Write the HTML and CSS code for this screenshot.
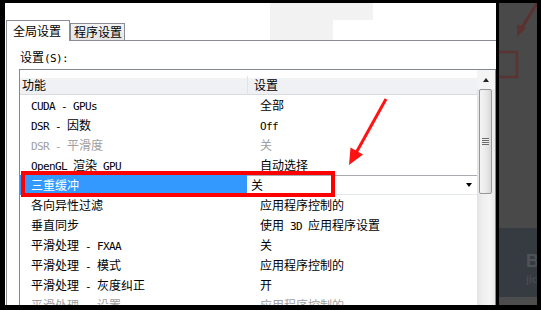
FILE: index.html
```html
<!DOCTYPE html>
<html lang="zh-CN">

<head>
    <meta charset="UTF-8">
    <title>全局设置</title>
    <link rel="stylesheet" href="styles.css">
</head>

<body>
    <div class="screen">
        <div class="dialog">
            <div class="tabs">
                <div class="tab active">全局设置</div>
                <div class="tab">程序设置</div>
            </div>
            <div class="panel">
                <div class="label">设置<span class="en">(S):</span></div>
                <div class="listbox">
                    <div class="grid">
                        <div class="head">
                            <div class="c1">功能</div>
                            <div class="c2">设置</div>
                        </div>
                        <div class="row"><div class="c1"><span class="en">CUDA - GPUs</span></div><div class="c2">全部</div></div>
                        <div class="row"><div class="c1"><span class="en">DSR - </span>因数</div><div class="c2"><span class="en">Off</span></div></div>
                        <div class="row disabled"><div class="c1"><span class="en">DSR - </span>平滑度</div><div class="c2">关</div></div>
                        <div class="row"><div class="c1"><span class="en">OpenGL </span>渲染<span class="en"> GPU</span></div><div class="c2">自动选择</div></div>
                        <div class="row selected">
                            <div class="c1">三重缓冲</div>
                            <div class="editor"><span>关</span><span class="drop"></span></div>
                            <div class="mark"></div>
                        </div>
                        <div class="row"><div class="c1">各向异性过滤</div><div class="c2">应用程序控制的</div></div>
                        <div class="row"><div class="c1">垂直同步</div><div class="c2">使用<span class="en"> 3D </span>应用程序设置</div></div>
                        <div class="row"><div class="c1">平滑处理<span class="en"> - FXAA</span></div><div class="c2">关</div></div>
                        <div class="row"><div class="c1">平滑处理<span class="en"> - </span>模式</div><div class="c2">应用程序控制的</div></div>
                        <div class="row"><div class="c1">平滑处理<span class="en"> - </span>灰度纠正</div><div class="c2">开</div></div>
                        <div class="row disabled"><div class="c1">平滑处理<span class="en"> - </span>设置</div><div class="c2">应用程序控制的</div></div>
                    </div>
                    <div class="scrollbar">
                        <div class="up"><span class="up-arrow"></span></div>
                        <div class="thumb"><div class="grip"></div></div>
                        <div class="track"></div>
                    </div>
                </div>
            </div>
        </div>

        <div class="backdrop">
            <div class="bd-top">
                <svg width="38" height="225" viewBox="0 0 38 225">
                    <line x1="42" y1="-6" x2="22" y2="26" stroke="#5c3131" stroke-width="3" />
                    <polygon points="18,34 27,25 18,21" fill="#5c3131" />
                    <polyline points="-2,49 18,49 18,74 -2,74" fill="none" stroke="#5a3434" stroke-width="2.5" />
                </svg>
            </div>
            <div class="bd-mid">
                <div class="ghost-big">Bi</div>
                <div class="ghost-small">jio</div>
            </div>
            <div class="bd-bot"></div>
        </div>

        <svg class="arrow" width="541" height="310" viewBox="0 0 541 310">
            <line x1="386" y1="99" x2="356" y2="153" stroke="#ff1414" stroke-width="3" />
            <polygon points="349,165 363,154.5 350.5,147.5" fill="#ff1414" />
        </svg>
    </div>
</body>

</html>
```

FILE: styles.css
```css
* {
    box-sizing: border-box;
}

body {
    margin: 0;
    background-color: #000;
    font-family: "Noto Sans CJK SC", sans-serif;
    font-size: 12px;
    color: #000;
}

.en {
    font-family: "DejaVu Sans Mono", monospace;
    font-size: 11px;
    letter-spacing: -0.62px;
    white-space: pre;
}

.screen {
    position: relative;
    width: 541px;
    height: 310px;
    padding: 3px 4px 5px 5px;
    display: flex;
    gap: 3px;
    overflow: hidden;
}

.dialog {
    width: 491px;
    padding: 17px 0 0 1px;
    overflow: hidden;
    background:
        linear-gradient(#f2f2f2, #f2f2f2) 265px 0 / 103px 17px no-repeat,
        linear-gradient(#f2f2f2, #f2f2f2) 265px 17px / 63px 20px no-repeat,
        #fff;
}

/* tabs */
.tabs {
    display: flex;
    align-items: flex-end;
    height: 21px;
    position: relative;
    z-index: 1;
}

.tab {
    border: 1px solid #898c95;
    border-bottom: none;
    line-height: 16px;
    white-space: nowrap;
}

.tab.active {
    width: 64px;
    height: 21px;
    padding: 2px 0 0 6px;
    background-color: #fff;
}

.tab:not(.active) {
    width: 55px;
    height: 17px;
    margin-bottom: 1px;
    padding: 0 0 0 3px;
    background: linear-gradient(#f2f2f2, #e5e5e5);
}

.panel {
    margin-top: -1px;
    border-top: 1px solid #898c95;
    border-left: 1px solid #898c95;
    height: 300px;
}

.label {
    padding: 8px 0 0 13px;
    line-height: 16px;
    height: 28px;
}

/* list */
.listbox {
    margin-left: 12px;
    width: 477px;
    height: 260px;
    border: 1px solid #828790;
    display: flex;
}

.grid {
    flex: 1;
}

.head,
.row {
    display: flex;
    white-space: nowrap;
}

.head {
    height: 25px;
    padding-top: 6px;
    line-height: 17px;
    background: linear-gradient(#fff 0, #fff 35%, #f1f2f4 35%, #eef0f3 100%);
    border-bottom: 1px solid #d9dbde;
}

.head .c1 {
    width: 228px;
    padding-left: 2px;
    border-right: 1px solid #e2e3e5;
}

.head .c2 {
    padding-left: 6px;
}

.row {
    height: 20px;
    line-height: 20px;
    position: relative;
}

.row .c1 {
    width: 228px;
    padding-left: 11px;
}

.row .c2 {
    padding-left: 12px;
}

.row.disabled {
    color: #a0a0a0;
}

.row.selected .c1 {
    width: 227px;
    background-color: #3399ff;
    color: #fff;
}

.editor {
    flex: 1;
    display: flex;
    align-items: center;
    padding-left: 4px;
    border-top: 1px solid #a9abb0;
    border-bottom: 1px solid #e3e9ef;
    line-height: 18px;
}

.drop {
    margin-left: auto;
    margin-right: 5px;
    border-top: 4px solid #000;
    border-left: 3.5px solid transparent;
    border-right: 3.5px solid transparent;
}

.mark {
    position: absolute;
    left: 1px;
    top: -4px;
    width: 314px;
    height: 26px;
    border: 4px solid #ff0000;
}

/* scrollbar */
.scrollbar {
    width: 18px;
    display: flex;
    flex-direction: column;
    background: linear-gradient(to right, #e3e3e3, #efefef 30%, #f5f5f5 70%, #e9e9e9);
}

.up {
    height: 19px;
    display: flex;
    justify-content: center;
    align-items: center;
    background-color: #f4f4f4;
}

.up-arrow {
    border-bottom: 4px solid #222;
    border-left: 3.5px solid transparent;
    border-right: 3.5px solid transparent;
}

.thumb {
    height: 105px;
    margin: 0 3px 0 2px;
    border: 1px solid #979797;
    border-radius: 2px;
    background: linear-gradient(to right, #f4f4f4, #e9e9e9 55%, #d8d8d8);
    display: flex;
    justify-content: center;
    align-items: center;
}

.grip {
    width: 7px;
    height: 7px;
    background: repeating-linear-gradient(#6b6b6b 0, #6b6b6b 1px, #f0f0f0 1px, #f0f0f0 2px);
}

.track {
    flex: 1;
}

/* background window on the right */
.backdrop {
    flex: 1;
    display: flex;
    flex-direction: column;
    overflow: hidden;
}

.bd-top {
    height: 225px;
    background-color: #494949;
}

.bd-top svg {
    display: block;
}

.bd-mid {
    height: 69px;
    padding: 24px 0 0 27px;
    background-color: #363b41;
    font-family: "Liberation Sans", sans-serif;
    font-weight: bold;
    white-space: nowrap;
}

.ghost-big {
    font-size: 18px;
    line-height: 18px;
    color: #4e535a;
}

.ghost-small {
    margin-top: 4px;
    font-size: 11px;
    line-height: 11px;
    color: #464b52;
}

.bd-bot {
    flex: 1;
    background-color: #4d4d4d;
}

.arrow {
    position: absolute;
    left: 0;
    top: 0;
    pointer-events: none;
}
```
